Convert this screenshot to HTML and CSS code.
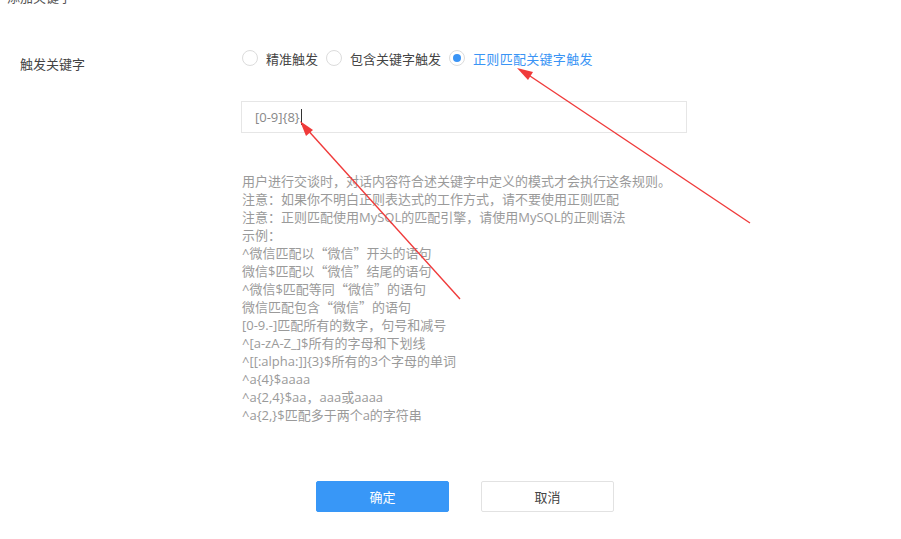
FILE: index.html
```html
<!DOCTYPE html>
<html lang="zh">
<head>
<meta charset="utf-8">
<link rel="stylesheet" href="styles.css">
</head>
<body>
<div class="page">
  <div class="title">添加关键字</div>
  <div class="form-row">
    <div class="label">触发关键字</div>
    <div class="radios">
      <label class="radio"><span class="circle"></span><span class="rtext">精准触发</span></label>
      <label class="radio"><span class="circle"></span><span class="rtext">包含关键字触发</span></label>
      <label class="radio checked"><span class="circle"><span class="dot"></span></span><span class="rtext">正则匹配关键字触发</span></label>
    </div>
  </div>
  <div class="input-box"><span class="value">[0-9]{8}</span><span class="caret"></span></div>
  <div class="help">
    <div>用户进行交谈时，对话内容符合述关键字中定义的模式才会执行这条规则。</div>
    <div>注意：如果你不明白正则表达式的工作方式，请不要使用正则匹配</div>
    <div>注意：正则匹配使用MySQL的匹配引擎，请使用MySQL的正则语法</div>
    <div>示例：</div>
    <div>^微信匹配以<span class="cjk">“微信”</span>开头的语句</div>
    <div>微信$匹配以<span class="cjk">“微信”</span>结尾的语句</div>
    <div>^微信$匹配等同<span class="cjk">“微信”</span>的语句</div>
    <div>微信匹配包含<span class="cjk">“微信”</span>的语句</div>
    <div>[0-9.-]匹配所有的数字，句号和减号</div>
    <div>^[a-zA-Z_]$所有的字母和下划线</div>
    <div>^[[:alpha:]]{3}$所有的3个字母的单词</div>
    <div>^a{4}$aaaa</div>
    <div>^a{2,4}$aa，aaa或aaaa</div>
    <div>^a{2,}$匹配多于两个a的字符串</div>
  </div>
  <div class="buttons">
    <button class="btn primary">确定</button>
    <button class="btn">取消</button>
  </div>
  <svg class="arrows" width="901" height="539" viewBox="0 0 901 539">
    <line x1="750" y1="235" x2="524" y2="84" stroke="#f03a3a" stroke-width="1.4"/>
    <polygon points="517,80 533,84 528,92" fill="#f03a3a"/>
    <line x1="460" y1="311" x2="305" y2="139" stroke="#f03a3a" stroke-width="1.4"/>
    <polygon points="300,133 313,142 306,148" fill="#f03a3a"/>
  </svg>
</div>
</body>
</html>
```
FILE: styles.css
```css
html, body {
  margin: 0;
  padding: 0;
  background: #fff;
}
body {
  font-family: "Noto Sans CJK SC", "Noto Sans", sans-serif;
  font-size: 13px;
  color: #333;
  overflow: hidden;
}
.page {
  position: relative;
  width: 901px;
  height: 539px;
}
.title {
  margin-top: -12px;
  padding-left: 7px;
  height: 18px;
  line-height: 18px;
  color: #555;
}
.form-row {
  display: flex;
  align-items: center;
  margin-top: 43px;
  height: 18px;
}
.label {
  width: 222px;
  padding-left: 20px;
  margin-top: 11px;
  color: #444;
}
.radios {
  display: flex;
  align-items: center;
}
.radio {
  display: flex;
  align-items: center;
  margin-right: 8px;
  color: #444;
}
.circle {
  width: 14px;
  height: 14px;
  border: 1px solid #dcdcdc;
  border-radius: 50%;
  display: flex;
  align-items: center;
  justify-content: center;
  margin-right: 8px;
}
.dot {
  width: 8px;
  height: 8px;
  border-radius: 50%;
  background: #3a94f5;
}
.checked .rtext {
  color: #3a94f5;
  letter-spacing: 0.3px;
}
.input-box {
  margin-top: 34px;
  margin-left: 241px;
  width: 444px;
  height: 30px;
  border: 1px solid #e6e6e6;
  display: flex;
  align-items: center;
}
.value {
  margin-left: 13px;
  color: #888;
  font-family: "Open Sans", "Noto Sans CJK SC", sans-serif;
  font-size: 13px;
}
.caret {
  width: 1px;
  height: 16px;
  background: #333;
  margin-left: 1px;
}
.help {
  margin-top: 39px;
  margin-left: 242px;
  line-height: 18px;
  color: #9a9a9a;
  font-family: "Open Sans", "Noto Sans CJK SC", sans-serif;
}
.cjk {
  font-family: "Noto Sans CJK SC", sans-serif;
}
.buttons {
  display: flex;
  gap: 32px;
  margin-top: 57px;
  margin-left: 316px;
}
.btn {
  width: 133px;
  height: 31px;
  border: 1px solid #e2e2e2;
  border-radius: 2px;
  background: #fff;
  font-family: "Noto Sans CJK SC", sans-serif;
  font-size: 13px;
  color: #444;
  padding: 0;
}
.btn.primary {
  background: #3897f7;
  border-color: #3897f7;
  color: #fff;
}
.arrows {
  position: absolute;
  left: 0;
  top: 0;
  pointer-events: none;
}
```
